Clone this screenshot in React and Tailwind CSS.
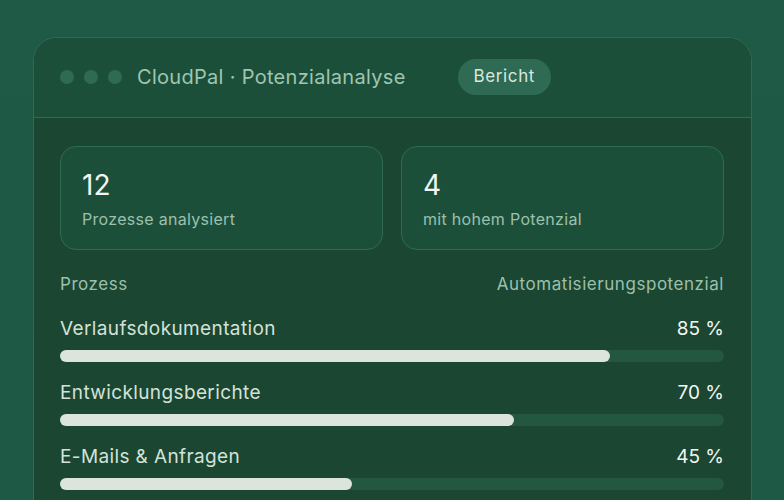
import React from "react";

const rows = [
  { name: "Verlaufsdokumentation", pct: "85 %", w: "w-[82.8%]" },
  { name: "Entwicklungsberichte", pct: "70 %", w: "w-[68.4%]" },
  { name: "E-Mails & Anfragen", pct: "45 %", w: "w-[44%]" },
];

export default function App() {
  return (
    <div
      className="w-[784px] h-[500px] overflow-hidden bg-gradient-to-b from-[#1f5a47] to-[#1e5945] pt-[37px] pl-[33px]"
      style={{ fontFamily: "Inter, 'Noto Sans', sans-serif" }}
    >
      <div className="w-[719px] h-[600px] rounded-[24px] border border-[#2f6b53] overflow-hidden bg-[#1a4632]">
        <div className="h-[80px] bg-[#1c4f3a] border-b border-[#2f6b53] flex items-center pl-[26px] pb-[2px]">
          <div className="flex gap-[10px]">
            <span className="w-[14px] h-[14px] rounded-full bg-[#2f6a55]" />
            <span className="w-[14px] h-[14px] rounded-full bg-[#2f6a55]" />
            <span className="w-[14px] h-[14px] rounded-full bg-[#2f6a55]" />
          </div>
          <div className="ml-[15px] text-[20px] text-[#9ec6b1] tracking-[0.3px]">
            CloudPal · Potenzialanalyse
          </div>
          <div className="ml-[52px] h-[36px] px-[16px] rounded-full bg-[#2f6a55] text-[#dae8de] text-[17px] tracking-[0.6px] flex items-center">
            Bericht
          </div>
        </div>
        <div className="pt-[28px] pl-[26px] pr-[27px]">
          <div className="grid grid-cols-2 gap-[18px]">
            <div className="h-[104px] rounded-[16px] border border-[#2f6b53] bg-[#1c4f3a] pt-[20px] pl-[21px]">
              <div className="text-[28px] leading-[36px] text-[#f2f6f3]">12</div>
              <div className="mt-[4px] text-[16px] leading-[24px] text-[#9dc0ad] tracking-[0.3px]">Prozesse analysiert</div>
            </div>
            <div className="h-[104px] rounded-[16px] border border-[#2f6b53] bg-[#1c4f3a] pt-[20px] pl-[21px]">
              <div className="text-[28px] leading-[36px] text-[#f2f6f3]">4</div>
              <div className="mt-[4px] text-[16px] leading-[24px] text-[#9dc0ad] tracking-[0.3px]">mit hohem Potenzial</div>
            </div>
          </div>
          <div className="mt-[22px] flex justify-between text-[17px] leading-[24px] text-[#9dc0ad] tracking-[0.55px]">
            <span>Prozess</span>
            <span>Automatisierungspotenzial</span>
          </div>
          <div className="mt-[19px] flex flex-col gap-[17px]">
            {rows.map((r) => (
              <div key={r.name}>
                <div className="flex justify-between text-[19px] leading-[28px]">
                  <span className="text-[#d3e2d8] tracking-[0.38px]">{r.name}</span>
                  <span className="text-[#f2f6f3]">{r.pct}</span>
                </div>
                <div className="mt-[7px] h-[12px] rounded-full bg-[#24573f]">
                  <div className={`h-full rounded-full bg-[#dbe5dd] ${r.w}`} />
                </div>
              </div>
            ))}
          </div>
        </div>
      </div>
    </div>
  );
}
